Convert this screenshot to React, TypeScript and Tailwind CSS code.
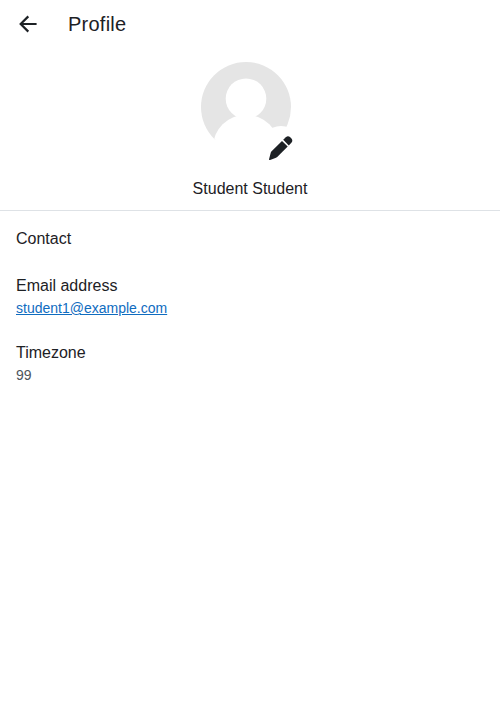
import React from "react";

const font = "font-['Liberation_Sans',Arial,sans-serif]";

function BackArrow() {
  return (
    <svg viewBox="0 0 24 24" className="h-6 w-6" fill="none" stroke="currentColor" strokeWidth="2.2" aria-hidden="true">
      <path d="M12.3 4.4 4.7 12l7.6 7.6M4.7 12h15.9" />
    </svg>
  );
}

function Avatar() {
  return (
    <svg viewBox="0 0 100 100" className="h-[100px] w-[100px]" aria-hidden="true">
      <defs>
        <clipPath id="disc">
          <circle cx="46" cy="51" r="45" />
        </clipPath>
      </defs>
      <g clipPath="url(#disc)">
        <rect width="100" height="84" fill="#e5e5e5" />
        <circle cx="46" cy="42.7" r="20.3" fill="#fff" />
        <ellipse cx="46" cy="91" rx="33" ry="32.3" fill="#fff" />
      </g>
    </svg>
  );
}

function Pencil() {
  return (
    <svg viewBox="0 0 24 24" className="h-6 w-6" fill="currentColor" aria-hidden="true">
      <path d="M2.6 15.2 13 4.9 18.7 10.6 8.2 21Q7.5 21.7 6.4 22.1L1.1 23.9Q-.2 24.3.1 23L1.6 17.3Q1.9 15.9 2.6 15.2z" />
      <path d="M14.2 3.8 16.8 1.2Q19-.6 21 1.1L22.4 2.5Q24.2 4.7 22.4 6.8L19.8 9.4z" />
    </svg>
  );
}

export default function App() {
  return (
    <main className={`h-[720px] w-full bg-white text-[#1d2125] ${font}`}>
      <header className="flex h-12 items-center pl-4">
        <BackArrow />
        <h1 className="ml-7 text-xl tracking-[0.25px]">Profile</h1>
      </header>
      <section className="flex h-[163px] flex-col items-center border-b border-[#dee2e6] pt-2">
        <div className="relative h-[100px] w-[100px]">
          <Avatar />
          <div className="absolute top-[70px] left-[59px] flex h-11 w-11 items-center justify-center rounded-full bg-white">
            <Pencil />
          </div>
        </div>
        <h2 className="mt-[21px] text-base leading-6">Student Student</h2>
      </section>
      <section className="px-4 pt-4">
        <h2 className="text-base leading-6">Contact</h2>
        <div className="mt-[23px]">
          <h3 className="text-base leading-6">Email address</h3>
          <a className="block text-sm leading-5 text-[#0f6cbf] underline">student1@example.com</a>
        </div>
        <div className="mt-[23px]">
          <h3 className="text-base leading-6">Timezone</h3>
          <p className="text-sm leading-5 text-[#4d545c]">99</p>
        </div>
      </section>
    </main>
  );
}
